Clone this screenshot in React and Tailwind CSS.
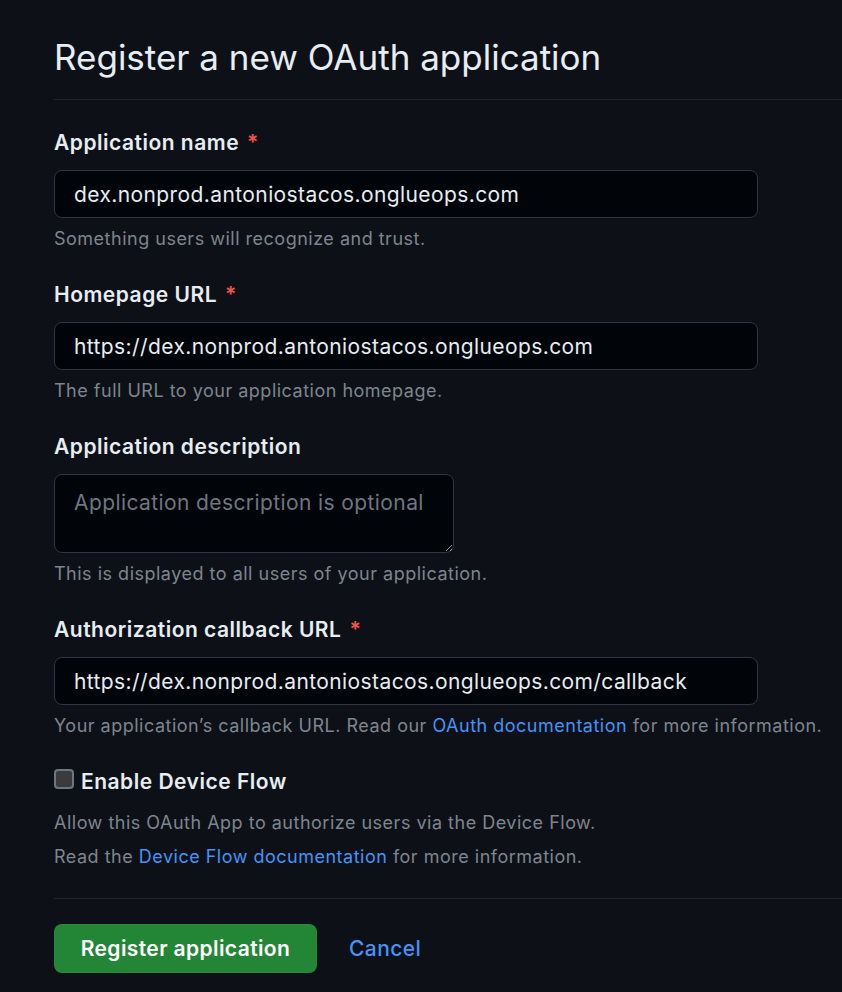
import React from 'react';

function Field({ label, required, hint, children }) {
  return (
    <div className="mb-[30px]">
      <label className="block text-[21px] leading-[28px] font-semibold tracking-[0.5px] text-[#e6edf3]">
        {label}
        {required && <span className="ml-[8px] text-[#f85149]">*</span>}
      </label>
      <div className="mt-[13px]">{children}</div>
      <p className="mt-[9px] text-[18px] leading-[24px] tracking-[0.5px] text-[#7d8590]">{hint}</p>
    </div>
  );
}

function TextInput({ value }) {
  return (
    <input
      readOnly
      value={value}
      className="block w-[704px] h-[48px] px-[19px] rounded-[8px] border border-[#30363d] bg-[#010409] text-[21px] tracking-[0.4px] text-[#e6edf3] outline-none"
    />
  );
}

export default function App() {
  return (
    <div className="min-h-screen bg-[#0d1117] pl-[54px] pt-[33px] font-['Inter',sans-serif] antialiased">
      <h2 className="text-[35px] leading-[48px] font-normal text-[#e6edf3] tracking-[0px]">
        Register a new OAuth application
      </h2>
      <div className="mt-[18px] h-px bg-[#21262d]" />

      <div className="mt-[29px]">
        <Field label="Application name" required hint="Something users will recognize and trust.">
          <TextInput value="dex.nonprod.antoniostacos.onglueops.com" />
        </Field>

        <Field label="Homepage URL" required hint="The full URL to your application homepage.">
          <TextInput value="https://dex.nonprod.antoniostacos.onglueops.com" />
        </Field>

        <Field label="Application description" hint="This is displayed to all users of your application.">
          <textarea
            readOnly
            placeholder="Application description is optional"
            className="block w-[400px] h-[79px] px-[19px] py-[14px] rounded-[8px] border border-[#30363d] bg-[#010409] text-[21px] leading-[28px] tracking-[0.4px] text-[#e6edf3] placeholder:text-[#6e7681] outline-none resize"
          />
        </Field>

        <Field
          label="Authorization callback URL"
          required
          hint={
            <>
              Your application’s callback URL. Read our{' '}
              <a className="text-[#4493f8]">OAuth documentation</a> for more information.
            </>
          }
        >
          <TextInput value="https://dex.nonprod.antoniostacos.onglueops.com/callback" />
        </Field>

        <div className="flex items-start">
          <span className="mt-[1px] w-[20px] h-[20px] rounded-[4px] border-2 border-[#6e7681] bg-[#3b3b3b] shrink-0" />
          <span className="ml-[7px] text-[21px] leading-[28px] font-semibold tracking-[0.5px] text-[#e6edf3]">
            Enable Device Flow
          </span>
        </div>
        <p className="mt-[15px] text-[18px] leading-[24px] tracking-[0.5px] text-[#7d8590]">
          Allow this OAuth App to authorize users via the Device Flow.
        </p>
        <p className="mt-[10px] text-[18px] leading-[24px] tracking-[0.5px] text-[#7d8590]">
          Read the <a className="text-[#4493f8]">Device Flow documentation</a> for more information.
        </p>
      </div>

      <div className="mt-[29px] h-px bg-[#21262d]" />

      <div className="mt-[25px] flex items-center pb-[19px]">
        <button className="w-[263px] h-[49px] rounded-[8px] bg-[#238636] border border-[#2a9142]/40 text-[21px] font-semibold tracking-[0.4px] text-white">
          Register application
        </button>
        <a className="ml-[32px] text-[21px] font-medium tracking-[0.4px] text-[#4493f8]">Cancel</a>
      </div>
    </div>
  );
}
